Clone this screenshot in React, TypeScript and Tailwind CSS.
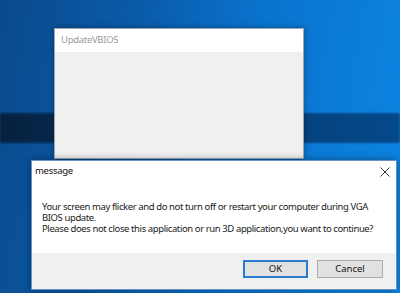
import React from "react";

const font = { fontFamily: '"Noto Sans", "Open Sans", sans-serif' };

function CloseIcon() {
  return (
    <svg width="10" height="10" viewBox="0 0 10 10" className="text-[#333]">
      <path d="M0.5 0.5 L9.5 9.5 M9.5 0.5 L0.5 9.5" stroke="currentColor" strokeWidth="1" />
    </svg>
  );
}

export default function App() {
  return (
    <div
      className="relative w-[400px] h-[293px] overflow-hidden bg-[linear-gradient(100deg,#0a4a8c_0%,#0a5aa8_30%,#0a74cf_60%,#0b86e3_100%)]"
      style={font}
    >
      {/* dark band across the wallpaper */}
      <div className="absolute left-0 top-[113px] w-[400px] h-[30px] bg-[linear-gradient(90deg,#06203c_0%,#073a6e_40%,#05498a_100%)] blur-[1px]" />

      {/* UpdateVBIOS window */}
      <div className="absolute left-[54px] top-[28px] w-[250px] h-[131px] flex flex-col bg-[#f0f0f0] border border-[#9aa9b8] shadow-[0_0_6px_rgba(0,0,0,0.35)]">
        <div className="h-[23px] bg-white flex items-center pl-[6px] text-[9.5px] tracking-[-0.3px] text-[#9a9a9a]">
          UpdateVBIOS
        </div>
        <div className="flex-1" />
      </div>

      {/* message dialog */}
      <div className="absolute left-[31px] top-[160px] w-[366px] h-[130px] flex flex-col bg-white border border-[#6a94c4] shadow-[0_0_8px_rgba(0,0,0,0.4)]">
        <div className="h-[21px] flex items-center justify-between pl-[3px] pr-[6px] text-[9.5px] tracking-[-0.3px] text-[#111]">
          <span>message</span>
          <CloseIcon />
        </div>
        <div className="flex-1 pt-[19px] pl-[10px] text-[9.5px] leading-[11px] text-[#1a1a1a] tracking-[-0.4px] whitespace-nowrap">
          <p>Your screen may flicker and do not turn off or restart your computer during VGA</p>
          <p>BIOS update.</p>
          <p>Please does not close this application or run 3D application,you want to continue?</p>
        </div>
        <div className="h-[36px] bg-[#f0f0f0] flex items-center justify-end gap-[9px] pr-[13px] pb-[4px]">
          <button className="w-[65px] h-[18px] bg-[#e1e1e1] border-2 border-[#2a7bd0] text-[9.5px] leading-none text-[#111]">
            OK
          </button>
          <button className="w-[66px] h-[18px] bg-[#e1e1e1] border border-[#adadad] text-[9.5px] leading-none text-[#111]">
            Cancel
          </button>
        </div>
      </div>
    </div>
  );
}
